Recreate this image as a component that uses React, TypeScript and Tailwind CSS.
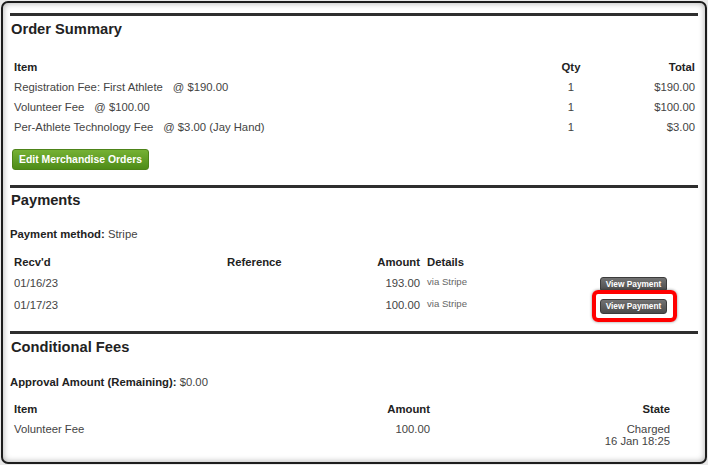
import React from 'react'

// Order detail panel: summary, payments and conditional fees

const orderItems = [
  { name: 'Registration Fee: First Athlete', price: '@ $190.00', qty: 1, total: '$190.00' },
  { name: 'Volunteer Fee', price: '@ $100.00', qty: 1, total: '$100.00' },
  { name: 'Per-Athlete Technology Fee', price: '@ $3.00 (Jay Hand)', qty: 1, total: '$3.00' },
]

const payments = [
  { date: '01/16/23', amount: '193.00', via: 'via Stripe', highlight: false },
  { date: '01/17/23', amount: '100.00', via: 'via Stripe', highlight: true },
]

const Rule = () => <div className="h-[3px] bg-[#2e2e2e]" />

const Heading = ({ children }: { children: React.ReactNode }) => (
  <h2 className="pl-[1px] text-[14.7px] leading-[20px] font-bold text-[#222]">{children}</h2>
)

const ViewPaymentButton = ({ highlight }: { highlight: boolean }) => (
  <div className="relative">
    <button className="w-[67px] h-[15px] rounded-[3px] border border-[#3c3c3c] bg-gradient-to-b from-[#727272] to-[#4c4c4c] text-white text-[8.3px] leading-[13px] font-bold">
      View Payment
    </button>
    {highlight && (
      <span className="absolute -left-[8px] -right-[10px] -top-[7px] -bottom-[8px] rounded-[6px] border-[4px] border-[#f00] shadow-[0_0_3px_rgba(0,0,0,0.45)]" />
    )}
  </div>
)

export default function App() {
  return (
    <div className="w-[708px] h-[465px] bg-[#e9e9e9] pt-[1px] pl-[1px] font-['Liberation_Sans',Arial,sans-serif] text-[11.3px] text-[#444]">
      <div className="w-[706px] h-[463px] rounded-[7px] border-2 border-[#1c1c1c] bg-white shadow-[inset_0_0_6px_rgba(0,0,0,0.35)] px-[7px] pt-[10px] overflow-hidden">
        {/* Order Summary */}
        <Rule />
        <div className="mt-[3px]">
          <Heading>Order Summary</Heading>
        </div>
        <div className="mt-[18px]">
          <div className="flex h-[20px] items-center font-bold text-[#222]">
            <div className="flex-1 pl-[4px]">Item</div>
            <div className="w-[50px] text-center">Qty</div>
            <div className="w-[102px] pr-[3px] text-right">Total</div>
          </div>
          {orderItems.map((it) => (
            <div key={it.name} className="flex h-[20px] items-center">
              <div className="flex-1 pl-[4px]">
                {it.name}
                <span className="ml-[10px]">{it.price}</span>
              </div>
              <div className="w-[50px] text-center">{it.qty}</div>
              <div className="w-[102px] pr-[3px] text-right">{it.total}</div>
            </div>
          ))}
        </div>
        <div className="mt-[12px] pl-[2px]">
          <button className="h-[21px] px-[6px] rounded-[3px] border border-[#4d8319] bg-gradient-to-b from-[#75b134] to-[#4e8c17] text-white text-[10.4px] font-bold leading-[19px]">
            Edit Merchandise Orders
          </button>
        </div>

        {/* Payments */}
        <div className="mt-[15px]">
          <Rule />
        </div>
        <div className="mt-[2px]">
          <Heading>Payments</Heading>
        </div>
        <div className="mt-[14px] h-[20px] leading-[20px]">
          <span className="font-bold text-[#222]">Payment method:</span> Stripe
        </div>
        <div className="mt-[8px]">
          <div className="flex h-[20px] items-center font-bold text-[#222]">
            <div className="w-[213px] pl-[4px]">Recv'd</div>
            <div className="w-[110px] pl-[4px]">Reference</div>
            <div className="w-[91px] pr-[4px] text-right">Amount</div>
            <div className="w-[247px] pl-[3px]">Details</div>
          </div>
          {payments.map((p) => (
            <div key={p.date} className="flex h-[22px] items-center">
              <div className="w-[213px] pl-[4px]">{p.date}</div>
              <div className="w-[110px] pl-[4px]" />
              <div className="w-[91px] pr-[4px] text-right">{p.amount}</div>
              <div className="w-[247px] pl-[3px] pr-[4px] flex items-center justify-between">
                <span className="text-[9.6px] text-[#666] -mt-[2px]">{p.via}</span>
                <ViewPaymentButton highlight={p.highlight} />
              </div>
            </div>
          ))}
        </div>

        {/* Conditional Fees */}
        <div className="mt-[15px]">
          <Rule />
        </div>
        <div className="mt-[3px]">
          <Heading>Conditional Fees</Heading>
        </div>
        <div className="mt-[15px] h-[20px] leading-[20px]">
          <span className="font-bold text-[#222]">Approval Amount (Remaining):</span> $0.00
        </div>
        <div className="mt-[7px]">
          <div className="flex h-[20px] items-center font-bold text-[#222]">
            <div className="w-[324px] pl-[4px]">Item</div>
            <div className="w-[100px] pr-[4px] text-right">Amount</div>
            <div className="w-[240px] pr-[4px] text-right">State</div>
          </div>
          <div className="flex pt-[4px] leading-[12px]">
            <div className="w-[324px] pl-[4px]">Volunteer Fee</div>
            <div className="w-[100px] pr-[4px] text-right">100.00</div>
            <div className="w-[240px] pr-[4px] text-right">
              Charged
              <br />
              16 Jan 18:25
            </div>
          </div>
        </div>
      </div>
    </div>
  )
}
